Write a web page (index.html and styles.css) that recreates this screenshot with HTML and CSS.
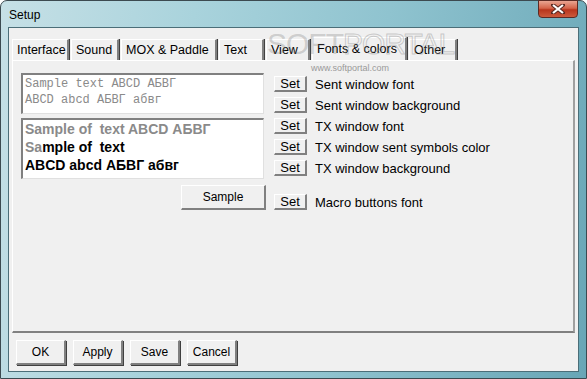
FILE: index.html
```html
<!DOCTYPE html>
<html lang="en">
<head>
    <meta charset="UTF-8">
    <title>Setup</title>
    <link rel="stylesheet" href="styles.css">
</head>
<body>
    <div class="window">
        <div class="titlebar">
            <span class="title">Setup</span>
            <button class="close-btn">
                <svg width="14" height="10" viewBox="0 0 14 10">
                    <path d="M2 1 L12 9 M12 1 L2 9" stroke="#5a2a22" stroke-width="4" stroke-linecap="square"/>
                    <path d="M2 1 L12 9 M12 1 L2 9" stroke="#ffffff" stroke-width="2.2"/>
                </svg>
            </button>
        </div>

        <div class="client">
            <div class="tabs">
                <div class="tab tab-interface">Interface</div>
                <div class="tab tab-sound">Sound</div>
                <div class="tab tab-mox">MOX &amp; Paddle</div>
                <div class="tab tab-text">Text</div>
                <div class="tab tab-view">View</div>
                <div class="tab tab-fonts active">Fonts &amp; colors</div>
                <div class="tab tab-other">Other</div>
            </div>

            <div class="panel">
                <div class="group">
                    <div class="sample-box sent-box">
                        <div>Sample text ABCD АБВГ</div>
                        <div>ABCD abcd АБВГ абвг</div>
                    </div>
                    <div class="set-list">
                        <div class="set-row"><button class="set-btn">Set</button><span>Sent window font</span></div>
                        <div class="set-row"><button class="set-btn">Set</button><span>Sent window background</span></div>
                    </div>
                </div>

                <div class="group tx-group">
                    <div class="sample-box tx-box">
                        <div class="gray">Sample of &nbsp;text ABCD АБВГ</div>
                        <div><span class="gray">Sa</span>mple of &nbsp;text</div>
                        <div>ABCD abcd АБВГ абвг</div>
                    </div>
                    <div class="set-list tx-list">
                        <div class="set-row"><button class="set-btn">Set</button><span>TX window font</span></div>
                        <div class="set-row"><button class="set-btn">Set</button><span>TX window sent symbols color</span></div>
                        <div class="set-row"><button class="set-btn">Set</button><span>TX window background</span></div>
                    </div>
                </div>

                <div class="macro-row">
                    <button class="sample-btn">Sample</button>
                    <div class="set-row"><button class="set-btn">Set</button><span>Macro buttons font</span></div>
                </div>
            </div>

            <div class="footer">
                <button class="dlg-btn">OK</button>
                <button class="dlg-btn">Apply</button>
                <button class="dlg-btn">Save</button>
                <button class="dlg-btn">Cancel</button>
            </div>
        </div>

        <div class="watermark">
            <span class="wm-soft">SOFT</span><span class="wm-portal">PORTAL</span>
            <span class="wm-url">www.softportal.com</span>
        </div>
    </div>
</body>
</html>
```

FILE: styles.css
```css
* {
    margin: 0;
    padding: 0;
    box-sizing: border-box;
}

body {
    width: 587px;
    height: 379px;
    background-color: #ffffff;
    font-family: 'Liberation Sans', Arial, sans-serif;
    font-size: 12px;
    color: #000;
}

.window {
    position: relative;
    width: 587px;
    height: 379px;
    display: flex;
    flex-direction: column;
    padding: 0 7px 6px 7px;
    border: 1px solid #3c4a50;
    border-radius: 7px 7px 0 0;
    background: linear-gradient(100deg, #c6e0e6 0%, #a9d3dc 30%, #8fc3cf 60%, #68a6b6 100%);
}

.titlebar {
    height: 26px;
    display: flex;
    align-items: flex-start;
    justify-content: space-between;
}

.title {
    font-size: 12px;
    margin-top: 7px;
    margin-left: 1px;
}

.close-btn {
    width: 40px;
    height: 18px;
    margin-right: 1px;
    margin-top: -1px;
    border: 1px solid #5b2a24;
    border-radius: 0 0 4px 4px;
    background: linear-gradient(#e9a592 0%, #d4644a 45%, #b8351c 55%, #cc5a3c 100%);
    display: flex;
    align-items: center;
    justify-content: center;
}

.client {
    flex: 1;
    display: flex;
    flex-direction: column;
    background-color: #f0f0f0;
    border: 1px solid #4b6e78;
    padding: 9px 2px 0 3px;
}

.tabs {
    display: flex;
    height: 23px;
    align-items: flex-end;
}

.tab {
    height: 21px;
    padding: 3px 0 0 4px;
    font-size: 12.5px;
    border-left: 1px solid #ffffff;
    border-top: 1px solid #ffffff;
    border-right: 2px solid #808080;
    box-shadow: 1px 0 0 #404040;
    margin-right: 2px;
    white-space: nowrap;
    overflow: hidden;
}

.tab-interface { width: 57px; }
.tab-sound { width: 48px; }
.tab-mox { width: 96px; }
.tab-text { width: 45px; }
.tab-view { width: 44px; }
.tab-fonts { width: 95px; }
.tab-other { width: 48px; }

.tab.active {
    height: 23px;
    padding-top: 4px;
}

.panel {
    height: 273px;
    border-top: 1px solid #ffffff;
    border-left: 1px solid #ffffff;
    border-right: 2px solid #a0a0a0;
    border-bottom: 2px solid #808080;
    padding: 12px 0 0 8px;
    margin-right: 1px;
}

.group {
    display: flex;
    gap: 10px;
}

.tx-group {
    margin-top: 4px;
}

.sample-box {
    width: 243px;
    background-color: #ffffff;
    border-top: 2px solid #808080;
    border-left: 2px solid #808080;
    border-right: 1px solid #e0e0e0;
    border-bottom: 1px solid #e0e0e0;
    padding-left: 2px;
}

.sent-box {
    height: 41px;
    font-family: 'Liberation Mono', 'Courier New', monospace;
    font-size: 12px;
    line-height: 16px;
    color: #8a8a8a;
    padding-top: 1px;
}

.tx-box {
    height: 61px;
    font-weight: bold;
    font-size: 14px;
    line-height: 18px;
    padding-top: 0;
}

.gray {
    color: #8a8a8a;
}

.set-list {
    display: flex;
    flex-direction: column;
    gap: 5px;
    padding-top: 3px;
}

.tx-list {
    padding-top: 0;
    gap: 5px;
}

.set-row {
    display: flex;
    align-items: center;
    gap: 8px;
    font-size: 13px;
    height: 16px;
}

.set-btn {
    width: 33px;
    height: 16px;
    font-family: 'Liberation Sans', Arial, sans-serif;
    font-size: 13px;
    line-height: 13px;
    background-color: #f0f0f0;
    border-top: 1px solid #ffffff;
    border-left: 1px solid #ffffff;
    border-right: 2px solid #808080;
    border-bottom: 2px solid #808080;
}

.macro-row {
    display: flex;
    align-items: flex-end;
    gap: 8px;
    margin-top: 6px;
    padding-left: 160px;
}

.sample-btn {
    width: 85px;
    height: 25px;
    font-family: 'Liberation Sans', Arial, sans-serif;
    font-size: 12px;
    background-color: #f0f0f0;
    border-top: 1px solid #ffffff;
    border-left: 1px solid #ffffff;
    border-right: 2px solid #808080;
    border-bottom: 2px solid #808080;
}

.footer {
    display: flex;
    gap: 7px;
    padding: 7px 0 0 4px;
}

.dlg-btn {
    width: 50px;
    height: 25px;
    font-family: 'Liberation Sans', Arial, sans-serif;
    font-size: 12px;
    background-color: #f0f0f0;
    border-top: 1px solid #ffffff;
    border-left: 1px solid #ffffff;
    border-right: 2px solid #808080;
    border-bottom: 2px solid #808080;
    box-shadow: 1px 1px 0 #404040;
}

.watermark {
    position: absolute;
    left: 266px;
    top: 28px;
    pointer-events: none;
}

.wm-soft,
.wm-portal {
    font-family: 'Liberation Sans', Arial, sans-serif;
    font-size: 30px;
    letter-spacing: -1px;
    line-height: 30px;
}

.wm-soft {
    color: rgba(120, 120, 120, 0.3);
}

.wm-portal {
    color: transparent;
    -webkit-text-stroke: 1px rgba(150, 150, 150, 0.45);
}

.wm-url {
    position: absolute;
    left: 44px;
    top: 34px;
    font-size: 9px;
    color: #9a9a9a;
    white-space: nowrap;
}
```
